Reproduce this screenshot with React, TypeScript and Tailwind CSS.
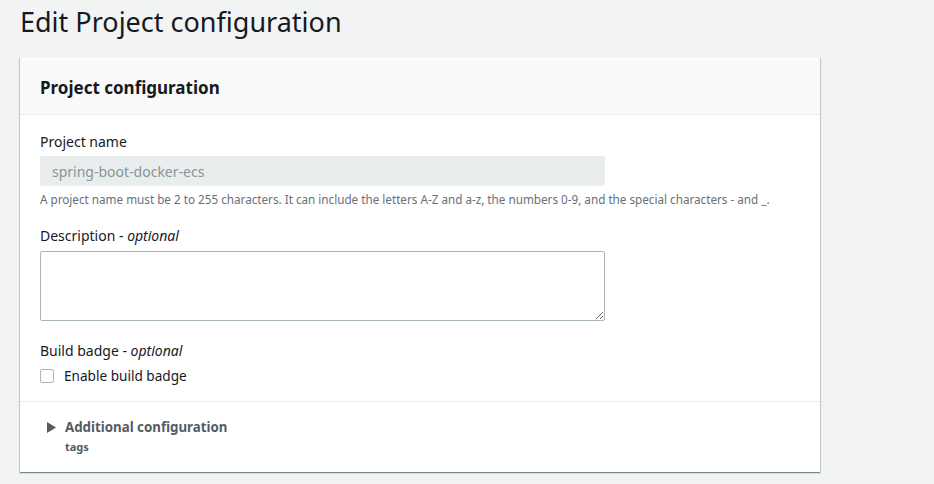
import React from "react";

export default function App() {
  return (
    <div
      className="min-h-[484px] w-full bg-[#f2f3f3] text-[#16191f]"
      style={{ fontFamily: '"Noto Sans", "Open Sans", Arial, sans-serif' }}
    >
      <div className="pl-5 pt-[2px]">
        <h1 className="text-[27px] leading-[40px] font-normal text-[#16191f]">Edit Project configuration</h1>
      </div>
      <div className="mt-[15px] ml-[20px] w-[800px] bg-white shadow-[0_1px_1px_0_rgba(0,28,36,0.3),1px_1px_1px_0_rgba(0,28,36,0.15),-1px_1px_1px_0_rgba(0,28,36,0.15)]">
        <div className="h-[58px] bg-[#fafafa] border-b border-[#eaeded] flex items-center px-5 pt-[4px]">
          <h2 className="text-[17px] font-bold leading-[22px]">Project configuration</h2>
        </div>
        <div className="px-5 pt-[17px] pb-[15px]">
          <div className="text-[14px] font-normal leading-[20px]">Project name</div>
          <div className="mt-[4px] w-[565px] h-[30px] rounded-[2px] bg-[#eaeded] flex items-center px-[12px] text-[14px] text-[#879596]">
            spring-boot-docker-ecs
          </div>
          <div className="mt-[5px] text-[11.7px] leading-[16px] text-[#687078]">
            A project name must be 2 to 255 characters. It can include the letters A-Z and a-z, the numbers 0-9, and the special characters - and _.
          </div>
          <div className="mt-[19px] text-[14px] font-normal leading-[20px]">
            Description - <i className="font-normal">optional</i>
          </div>
          <textarea className="mt-[5px] block w-[565px] h-[70px] rounded-[2px] border border-[#aab7b8] bg-white outline-none resize-y" />
          <div className="mt-[20px] text-[14px] font-normal leading-[20px]">
            Build badge - <i className="font-normal">optional</i>
          </div>
          <label className="mt-[5px] flex items-center gap-[10px] text-[13.6px] leading-[20px]">
            <span className="w-[14px] h-[14px] rounded-[2px] border border-[#aab7b8] bg-white" />
            <span>Enable build badge</span>
          </label>
        </div>
        <div className="border-t border-[#eaeded] pl-[27px] pt-[14px] pb-[17px]">
          <div className="flex items-center gap-[9px]">
            <svg width="9" height="11" viewBox="0 0 9 11">
              <path d="M0 0 L9 5.5 L0 11 Z" fill="#545b64" />
            </svg>
            <span className="text-[13.3px] font-bold text-[#545b64] leading-[22px]">Additional configuration</span>
          </div>
          <div className="mt-[1px] ml-[18px] text-[11px] font-bold text-[#545b64] leading-[16px]">tags</div>
        </div>
      </div>
    </div>
  );
}
